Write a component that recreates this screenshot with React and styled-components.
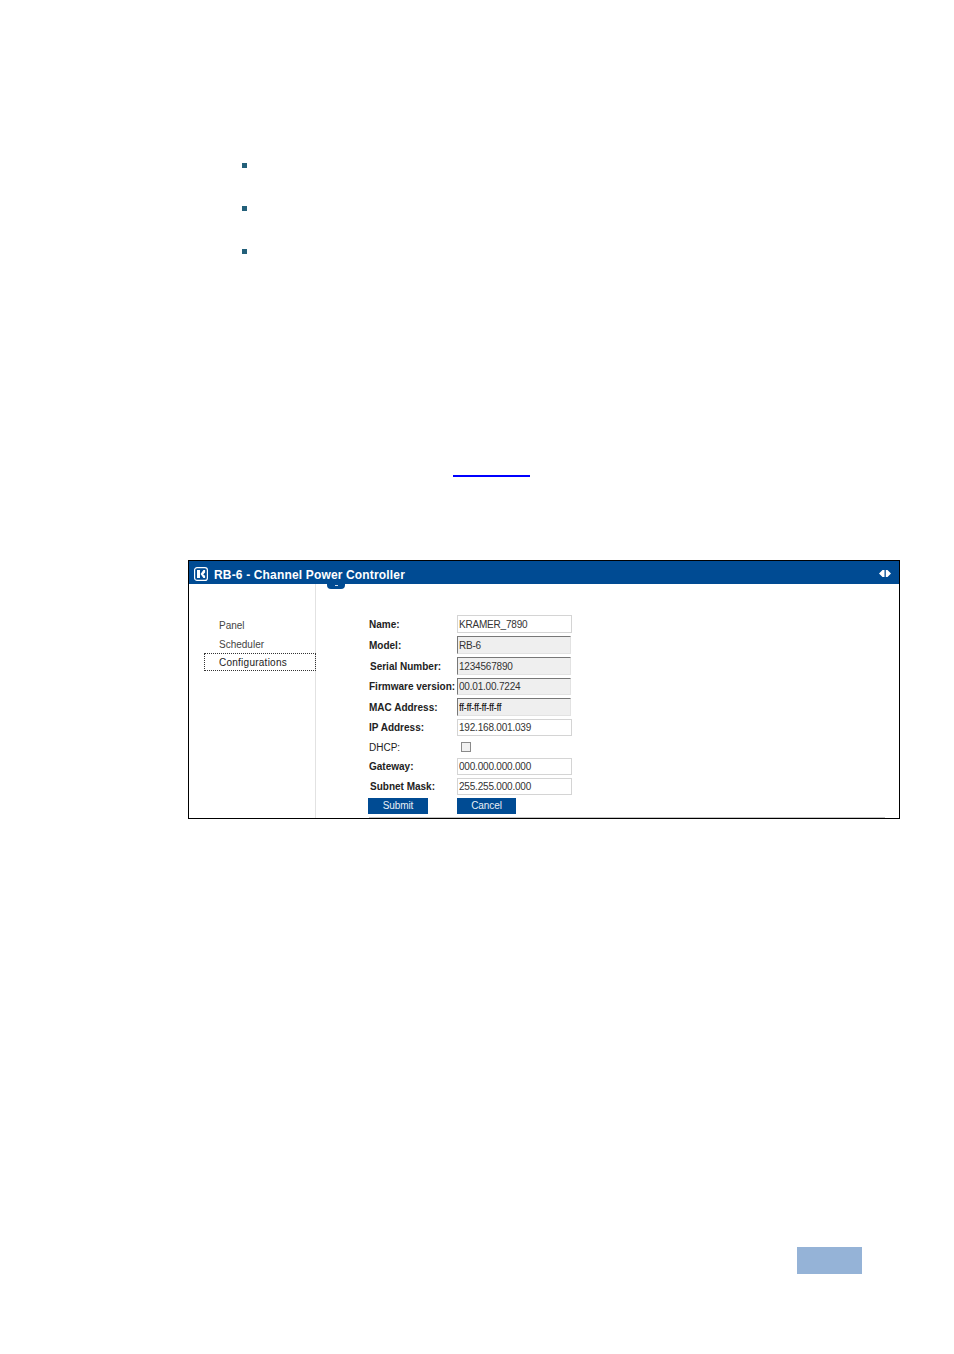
import React from 'react'
import styled, { createGlobalStyle } from 'styled-components'

const blue = '#004b93'

const GlobalStyle = createGlobalStyle`
  html, body {
    margin: 0;
    padding: 0;
    background: #fff;
  }
  * {
    box-sizing: border-box;
  }
`
const Page = styled.div`
  display: flex;
  flex-direction: column;
  width: 954px;
  height: 1354px;
  padding-top: 163px;
  overflow: hidden;
  font-family: 'Liberation Sans', Arial, sans-serif;
  background: #fff;
`
const Bullets = styled.ul`
  display: flex;
  flex-direction: column;
  gap: 38px;
  margin: 0;
  padding: 0 0 0 242px;
  list-style: none;
`
const Bullet = styled.li`
  width: 5px;
  height: 5px;
  background: #23607a;
`
const LinkRow = styled.div`
  height: 2px;
  margin: 221px 0 0 453px;
`
const BlankLink = styled.a`
  display: block;
  width: 77px;
  height: 2px;
  background: #0000ff;
`
const Frame = styled.section`
  display: flex;
  flex-direction: column;
  width: 712px;
  height: 259px;
  margin: 83px 0 0 188px;
  border: 1px solid #000;
`
const Header = styled.header`
  position: relative;
  display: flex;
  align-items: center;
  flex: none;
  height: 23px;
  padding: 2px 8px 0 5px;
  background: ${blue};
`
const Title = styled.h1`
  flex: 1;
  margin: 2px 0 0 6px;
  color: #fff;
  font-size: 12px;
  font-weight: bold;
  letter-spacing: 0.16px;
`
const Tab = styled.span`
  position: absolute;
  left: 138px;
  top: 23px;
  display: flex;
  justify-content: center;
  width: 18px;
  height: 5px;
  border-radius: 0 0 4px 4px;
  background: ${blue};
  &::after {
    content: '';
    width: 3px;
    height: 1px;
    margin-top: 1px;
    background: #cfdcea;
  }
`
const Body = styled.div`
  display: flex;
  flex: 1;
  min-height: 0;
`
const Sidebar = styled.nav`
  display: flex;
  flex-direction: column;
  width: 127px;
  padding: 32px 0 0 15px;
  border-right: 1px solid #e2e2e2;
`
const NavItem = styled.div`
  display: flex;
  align-items: center;
  height: 19px;
  padding-left: 15px;
  color: #444;
  font-size: 10px;
  ${p => p.$active && `
    height: 18px;
    margin: -1px -1px 0 0;
    border: 1px dotted #333;
    padding-left: 14px;
    color: #222;
    letter-spacing: 0.25px;
  `}
`
const Main = styled.div`
  display: flex;
  flex-direction: column;
  flex: 1;
  padding: 31px 14px 0 53px;
`
const Form = styled.form`
  display: flex;
  flex-direction: column;
  gap: 3px;
  margin: 0;
`
const Row = styled.div`
  display: flex;
  align-items: center;
  height: ${p => p.$height || 18}px;
`
const Label = styled.label`
  flex: none;
  width: 88px;
  padding-left: ${p => p.$indent || 0}px;
  color: #222;
  font-size: 10px;
  font-weight: ${p => (p.$plain ? 'normal' : 'bold')};
  white-space: nowrap;
`
const Field = styled.input`
  width: 115px;
  height: 100%;
  padding: 0 1px;
  border: 1px solid #d4d4d4;
  border-radius: 0;
  outline: none;
  color: #333;
  font-family: inherit;
  font-size: 10px;
  letter-spacing: -0.2px;
  background: #fff;
  &:read-only {
    width: 114px;
    border-color: #e2e2e2;
    border-top-color: #777;
    border-left-color: #777;
    background: #efefef;
  }
`
const TinyField = styled(Field)`
  color: #111;
  letter-spacing: -0.4px;
`
const Check = styled.span`
  width: 10px;
  height: 10px;
  margin-left: 4px;
  border: 1px solid #8a8a8a;
  background: #f1f1f1;
`
const Button = styled.button`
  width: ${p => p.$width}px;
  height: 16px;
  margin-left: ${p => p.$shift || 0}px;
  margin-right: ${p => p.$gap || 0}px;
  padding: 0 0 1px;
  border: 0;
  color: #e8eff6;
  font-family: inherit;
  font-size: 10px;
  letter-spacing: -0.1px;
  background: ${blue};
`
const BottomLine = styled.div`
  flex: none;
  height: 1px;
  margin-top: 3px;
  background: #c4c4c4;
`
const Pager = styled.div`
  flex: none;
  width: 65px;
  height: 27px;
  margin: 428px 0 0 797px;
  background: #95b3d7;
`

const Logo = () => (
  <svg width='14' height='14' viewBox='0 0 14 14'>
    <rect x='0.6' y='0.6' width='12.8' height='12.8' rx='2.5' fill='none' stroke='#fff' strokeWidth='1.2' />
    <path d='M3 3h3v8H3z M6.6 7 9.4 3h1.7v2.6L9.2 7.4l1.9 1.4V11H9.4z' fill='#fff' />
  </svg>
)

const ResizeIcon = () => (
  <svg width='12' height='7' viewBox='0 0 12 7'>
    <path d='M5.5 0v7H3.5L0 3.5 3.5 0z M6.8 0h1.7L12 3.5 8.5 7H6.8z' fill='#fff' />
  </svg>
)

const fields = [
  { label: 'Name:', value: 'KRAMER_7890' },
  { label: 'Model:', value: 'RB-6', locked: true },
  { label: 'Serial Number:', value: '1234567890', locked: true, indent: 1 },
  { label: 'Firmware version:', value: '00.01.00.7224', locked: true, height: 17 },
  { label: 'MAC Address:', value: 'ff-ff-ff-ff-ff-ff', locked: true, tiny: true },
  { label: 'IP Address:', value: '192.168.001.039', height: 17 },
]

const App = () => (
  <Page>
    <GlobalStyle />
    <Bullets>
      <Bullet />
      <Bullet />
      <Bullet />
    </Bullets>
    <LinkRow>
      <BlankLink href='#' aria-label='link' />
    </LinkRow>
    <Frame>
      <Header>
        <Logo />
        <Title>RB-6 - Channel Power Controller</Title>
        <ResizeIcon />
        <Tab />
      </Header>
      <Body>
        <Sidebar>
          <NavItem>Panel</NavItem>
          <NavItem>Scheduler</NavItem>
          <NavItem $active>Configurations</NavItem>
        </Sidebar>
        <Main>
          <Form onSubmit={e => e.preventDefault()}>
            {fields.map(f => {
              const Input = f.tiny ? TinyField : Field
              return (
                <Row key={f.label} $height={f.height}>
                  <Label $indent={f.indent}>{f.label}</Label>
                  <Input value={f.value} readOnly={!!f.locked} onChange={() => {}} />
                </Row>
              )
            })}
            <Row $height={16}>
              <Label $plain>DHCP:</Label>
              <Check />
            </Row>
            <Row $height={17}>
              <Label>Gateway:</Label>
              <Field value='000.000.000.000' onChange={() => {}} />
            </Row>
            <Row $height={17}>
              <Label $indent={1}>Subnet Mask:</Label>
              <Field value='255.255.000.000' onChange={() => {}} />
            </Row>
            <Row $height={16}>
              <Button $width={60} $shift={-1} $gap={29} type='submit'>Submit</Button>
              <Button $width={59} type='button'>Cancel</Button>
            </Row>
          </Form>
          <BottomLine />
        </Main>
      </Body>
    </Frame>
    <Pager />
  </Page>
)

export default App
